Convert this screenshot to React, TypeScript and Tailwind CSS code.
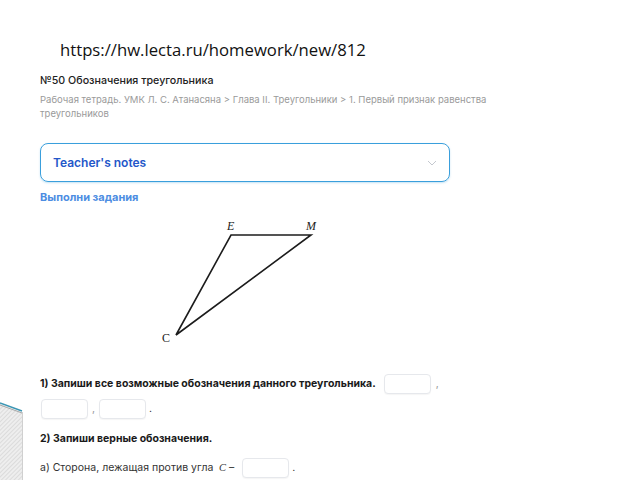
import React from 'react';

const ui = { fontFamily: 'Inter, "Noto Sans", sans-serif' };

function AnswerBox({ className = '' }: { className?: string }) {
  return (
    <span
      className={`inline-block h-[20px] w-[47px] rounded-[4px] border border-[#e6e8ec] bg-white align-middle shadow-[0_1px_1px_rgba(0,0,0,0.04)] ${className}`}
    />
  );
}

function Triangle() {
  return (
    <svg width="277" height="130" viewBox="0 0 277 130" className="block">
      <polygon points="124,20 204,20 69,120" fill="none" stroke="#1c1c1c" strokeWidth="1.6" strokeLinejoin="miter" />
      <text x="120" y="15" fontFamily='"Liberation Serif", serif' fontStyle="italic" fontSize="12" fill="#222">E</text>
      <text x="199" y="15" fontFamily='"Liberation Serif", serif' fontStyle="italic" fontSize="12" fill="#222">M</text>
      <text x="55" y="127" fontFamily='"Liberation Serif", serif' fontSize="12" fill="#222">C</text>
    </svg>
  );
}

function CornerDecor() {
  return (
    <svg width="26" height="80" viewBox="0 0 26 80" className="absolute bottom-0 left-0">
      <defs>
        <pattern id="hatch" width="3" height="3" patternUnits="userSpaceOnUse" patternTransform="rotate(45)">
          <rect width="3" height="3" fill="#eeeeee" />
          <line x1="0" y1="0" x2="0" y2="3" stroke="#c9c9c9" strokeWidth="1" />
        </pattern>
      </defs>
      <polygon points="0,4 22,12 22,80 0,80" fill="url(#hatch)" />
      <line x1="0" y1="3" x2="22" y2="11" stroke="#3c96b4" strokeWidth="1.4" />
      <line x1="0" y1="5" x2="22" y2="13" stroke="#a8a8a8" strokeWidth="1" />
      <line x1="22.5" y1="12" x2="22.5" y2="80" stroke="#d0d0d0" strokeWidth="1" />
    </svg>
  );
}

export default function App() {
  return (
    <div className="relative h-[480px] w-[640px] overflow-hidden bg-white" style={ui}>
      <CornerDecor />
      <div className="pl-[60px] pt-[40px]">
        <div className="text-[16.7px] leading-[20px] text-[#111]" style={{ fontFamily: '"Open Sans", "DejaVu Sans", sans-serif' }}>
          https://hw.lecta.ru/homework/new/812
        </div>
      </div>

      <div className="pl-[40px] pr-[150px]">
        <div className="mt-[13px] text-[10.7px] font-medium leading-[16px] text-[#222]">№50 Обозначения треугольника</div>
        <div className="mt-[4px] text-[9.5px] leading-[14px] text-[#9a9a9a]">
          Рабочая тетрадь. УМК Л. С. Атанасяна &gt; Глава II. Треугольники &gt; 1. Первый признак равенства треугольников
        </div>

        <div className="mt-[22px] flex h-[39px] w-[410px] items-center justify-between rounded-[8px] border-[1.5px] border-[#3a9fdc] pl-[12px] pr-[12px] shadow-[0_1px_2px_rgba(58,159,220,0.3)]">
          <span className="text-[12px] font-semibold text-[#2457c9]">Teacher's notes</span>
          <svg width="10" height="6" viewBox="0 0 10 6">
            <path d="M1 1 L5 5 L9 1" fill="none" stroke="#c4c8cf" strokeWidth="1" />
          </svg>
        </div>

        <div className="mt-[8px] text-[11px] font-bold leading-[14px] text-[#4d8de2]">Выполни задания</div>

        <div className="ml-[67px] mt-[11px]">
          <Triangle />
        </div>

        <div className="mt-[29px] flex items-center text-[10.5px] font-bold text-[#1a1a1a]">
          <span>1) Запиши все возможные обозначения данного треугольника.</span>
          <AnswerBox className="ml-[8px]" />
          <span className="ml-[5px] font-normal text-[#999]">,</span>
        </div>
        <div className="mt-[5px] flex items-center text-[10.5px] text-[#333]">
          <AnswerBox className="ml-[1px]" />
          <span className="mx-[4px] text-[#999]">,</span>
          <AnswerBox />
          <span className="ml-[3px]">.</span>
        </div>

        <div className="mt-[13px] text-[10.5px] font-bold leading-[14px] text-[#1a1a1a]">2) Запиши верные обозначения.</div>

        <div className="mt-[12px] flex items-center text-[10.5px] text-[#333]">
          <span>а) Сторона, лежащая против угла&nbsp;</span>
          <span className="italic" style={{ fontFamily: '"Liberation Serif", serif' }}>&nbsp;C</span>
          <span>&nbsp;–&nbsp;</span>
          <AnswerBox className="ml-[5px]" />
          <span className="ml-[3px]">.</span>
        </div>
      </div>
    </div>
  );
}
